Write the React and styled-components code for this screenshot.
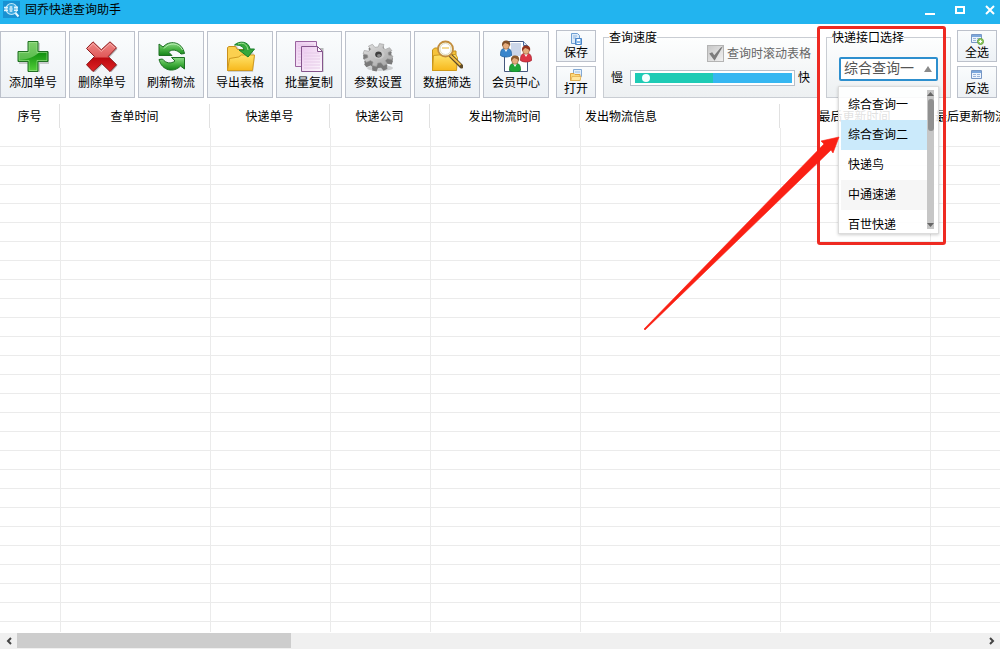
import React, { useState } from "react";
import styled, { createGlobalStyle } from "styled-components";

const GlobalStyle = createGlobalStyle`
  * {
    box-sizing: border-box;
  }
  body {
    margin: 0;
    background: #fff;
    overflow: hidden;
  }
  body, button, select, input {
    font-family: "Liberation Sans", "Noto Sans CJK SC", sans-serif;
    font-size: 12px;
    line-height: 16px;
    color: #000;
  }
`;

const Window = styled.div`
  display: flex;
  flex-direction: column;
  height: 100vh;
`;

const TitleBar = styled.header`
  display: flex;
  align-items: center;
  flex: none;
  height: 24px;
  padding: 0 3px 5px;
  background: #22b4ef;
`;

const AppTitle = styled.h1`
  flex: 1;
  margin: 0 0 0 5px;
  font-size: 12px;
  font-weight: normal;
`;

const WindowButton = styled.button`
  display: flex;
  width: 14px;
  height: 14px;
  margin-left: 16px;
  padding: 0;
  border: none;
  background: none;
`;

const Toolbar = styled.div`
  display: flex;
  align-items: flex-end;
  flex: none;
  padding: 6px 3px 6px 0;
`;

const ToolButtons = styled.div`
  display: flex;
  gap: 3px;
`;

const ToolButton = styled.button`
  display: flex;
  flex-direction: column;
  align-items: center;
  gap: 3px;
  width: 66px;
  height: 67px;
  padding: 8px 0 0;
  border: 1px solid #bcc1cb;
  background: linear-gradient(#fafcfd, #edf1f5);
  white-space: nowrap;
`;

const SmallButtons = styled.div`
  display: flex;
  flex-direction: column;
  gap: 4px;
  margin-left: ${(props) => props.$gap}px;
`;

const SmallButton = styled.button`
  display: flex;
  flex-direction: column;
  align-items: center;
  width: 40px;
  height: 32px;
  padding: 2px 0 0;
  border: 1px solid #bcc1cb;
  background: linear-gradient(#fafcfd, #edf1f5);
`;

const GroupBox = styled.fieldset`
  min-width: 0;
  height: 68px;
  margin: 0;
  padding: 0;
  border: 1px solid #c9cdd3;
  background: linear-gradient(#fdfefe, #edf0f2);
`;

const GroupTitle = styled.legend`
  height: 14px;
  margin-left: 5px;
  padding: 0;
`;

const SpeedArea = styled.div`
  flex: 1;
  margin-left: 7px;
`;

const ScrollOption = styled.label`
  display: flex;
  align-items: center;
  justify-content: flex-end;
  gap: 3px;
  height: 19px;
  padding-right: 6px;
  color: #666;
`;

const CheckBox = styled.input`
  appearance: none;
  width: 17px;
  height: 17px;
  margin: 0;
  border: 1px solid #b4b4b4;
  background: linear-gradient(135deg, #c8c8c8, #f0f0f0);

  &:checked::before {
    content: "";
    display: block;
    width: 15px;
    height: 15px;
    background: #7c7c7c;
    clip-path: polygon(8% 50%, 28% 42%, 42% 62%, 84% 12%, 100% 2%, 44% 98%);
  }
`;

const SpeedRow = styled.div`
  display: flex;
  align-items: center;
  height: 30px;
  padding: 0 7px;
`;

const SpeedSlider = styled.input`
  appearance: none;
  flex: 1;
  min-width: 0;
  height: 16px;
  margin: 0 3px 0 7px;
  padding: 2px 2px 2px 4px;
  border: 1px solid #b7bfca;
  background:
    linear-gradient(90deg, #1ecbb5 50%, #36b7f1 50%) content-box,
    #fff;

  &::-webkit-slider-thumb {
    appearance: none;
    width: 8px;
    height: 8px;
    border-radius: 50%;
    background: #f4ffff;
  }
`;

const ApiArea = styled.div`
  position: relative;
  flex: none;
  width: 125px;
  margin-left: 8px;
`;

const SelectWrap = styled.div`
  position: relative;
  margin: 13px 12px 0;
`;

const ApiSelect = styled.select`
  appearance: none;
  display: block;
  width: 100%;
  height: 24px;
  padding: 0 3px 2px;
  border: 2px solid #2d8fce;
  border-radius: 2px;
  background: #fff;
  font-size: 14px;
  line-height: 18px;
  color: #555;
`;

const SelectArrow = styled.svg`
  position: absolute;
  top: 9px;
  right: 6px;
  pointer-events: none;
`;

const Popup = styled.div`
  position: absolute;
  z-index: 1;
  top: 29px;
  left: -1px;
  right: -1px;
  display: flex;
  height: 148px;
  padding: 3px 4px 1px 2px;
  border: 1px solid #dcdcdc;
  background: rgba(255, 255, 255, 0.88);
  box-shadow: 0 1px 3px rgba(0, 0, 0, 0.2);
`;

const OptionList = styled.ul`
  flex: 1;
  margin: 0;
  padding: 0;
  overflow: hidden;
  list-style: none;
`;

const Option = styled.li`
  height: 30px;
  padding-left: 7px;
  line-height: 30px;
  background: ${(props) =>
    props.$selected ? "#cbeafb" : props.$striped ? "#f6f6f6" : "transparent"};
  cursor: pointer;
`;

const PopupScroll = styled.div`
  display: flex;
  flex-direction: column;
  align-items: center;
  justify-content: space-between;
  width: 7px;
  margin-bottom: 3px;
  padding: 2px 0;
  background: #c6c6c6;
`;

const PopupThumb = styled.div`
  width: 6px;
  height: 32px;
  margin: 3px 0 auto;
  border-radius: 3px;
  background: #909090;
`;

const Frame = styled.div`
  position: absolute;
  z-index: 2;
  top: -4px;
  left: -9px;
  right: 5px;
  height: 219px;
  border: 3px solid #ee2a22;
  border-radius: 3px;
  pointer-events: none;
`;

const Pointer = styled.svg`
  position: absolute;
  z-index: 3;
  top: 100px;
  left: -186px;
  pointer-events: none;
`;

const Grid = styled.main`
  flex: 1;
  min-height: 0;
  overflow: hidden;
`;

const Table = styled.table`
  width: 1130px;
  table-layout: fixed;
  border-collapse: separate;
  border-spacing: 0;
`;

const HeadCell = styled.th`
  height: 24px;
  padding: 2px 5px 0;
  border-right: 1px solid #e1e1e1;
  font-weight: normal;
  text-align: ${(props) => props.$align || "center"};
  white-space: nowrap;
`;

const Cell = styled.td`
  height: 19px;
  padding: 0;
  border-bottom: 1px solid #ebebeb;
  border-left: 1px solid #ebebeb;

  &:first-child {
    border-left: none;
  }
`;

const ScrollBar = styled.div`
  display: flex;
  flex: none;
  height: 16px;
  margin-top: 1px;
  background: #f0f0f0;
`;

const ScrollButton = styled.button`
  display: flex;
  align-items: center;
  justify-content: center;
  width: 17px;
  padding: 0;
  border: none;
  background: #f0f0f0;
`;

const ScrollTrack = styled.div`
  flex: 1;
`;

const ScrollThumb = styled.div`
  width: 28.4%;
  height: 15px;
  background: #cdcdcd;
`;

const Logo = () => (
  <svg width="17" height="17" viewBox="0 0 17 17">
    <rect width="17" height="17" fill="#1791d2" />
    <circle cx="8.500" cy="8" r="5.500" fill="#3ba8df" stroke="#bfe6f8" strokeWidth="1.2" />
    <path d="M12.500 12l3 3.500" stroke="#e6f7ff" strokeWidth="2" />
    <path d="M1 6.500h4M1 9.500h4M2 5.500v5M4 5.500v5M6.500 6h3M6 8h4M6.500 10h3M8 5v6M11 6.500h4M11 9.500h4M12 5v5M14 5v5" stroke="#e8f8ff" strokeWidth=".9" />
  </svg>
);

const AddIcon = () => (
  <svg width="32" height="32" viewBox="0 0 32 32">
    <defs>
      <linearGradient id="add" x2="0" y2="1">
        <stop offset="0" stopColor="#7fcf6c" />
        <stop offset="1" stopColor="#3fae37" />
      </linearGradient>
      <linearGradient id="addLow" x2="0" y2="1">
        <stop offset="0" stopColor="#0c8d0c" />
        <stop offset="1" stopColor="#55d03a" />
      </linearGradient>
    </defs>
    <path d="M12 3h11v9h10v12H23v9H12v-9H2V12h10z" fill="#777" opacity=".35" />
    <path d="M11 1.500h10v10h10v10H21v10H11v-10H1v-10h10z" fill="url(#add)" />
    <path d="M1 20c10 0 18-4 22-8.500h8v10H21v10H11v-10H1z" fill="url(#addLow)" />
    <path d="M12 2.500h8v10h10v8H20v10h-8v-10H2v-8h10z" fill="none" stroke="#a8e59a" opacity=".6" />
    <path d="M11 1.500h10v10h10v10H21v10H11v-10H1v-10h10z" fill="none" stroke="#1f6f22" />
  </svg>
);

const DeleteIcon = () => (
  <svg width="32" height="32" viewBox="0 0 32 32">
    <defs>
      <linearGradient id="del" x2="0" y2="1">
        <stop offset="0" stopColor="#f08a88" />
        <stop offset=".5" stopColor="#e05a5a" />
        <stop offset=".56" stopColor="#bd0a10" />
        <stop offset="1" stopColor="#df2325" />
      </linearGradient>
    </defs>
    <path d="M8 3l8 8 9-8 6.500 6-8 8.500 8 8-6.500 7-8.500-8-8 8-7-7 8-8-8-8z" fill="#555" opacity=".4" />
    <path d="M7 1.800l8.300 8L24 1.800l6.500 6-8.300 8.700 8.300 8.200-6.500 6.800-8.300-8-8.700 8-6.500-6.800 8-8.200-8-8z" fill="url(#del)" stroke="#8c1a1c" strokeLinejoin="round" />
    <path d="M2 8.500l5-5 8.300 8L24 3.500l5 4.500" fill="none" stroke="#fbc0be" opacity=".7" />
  </svg>
);

const RefreshIcon = () => (
  <svg width="32" height="32" viewBox="0 0 32 32">
    <defs>
      <linearGradient id="ref" x2="0" y2="1">
        <stop offset="0" stopColor="#8fda8a" />
        <stop offset=".5" stopColor="#49b344" />
        <stop offset="1" stopColor="#128316" />
      </linearGradient>
    </defs>
    <g fill="url(#ref)" stroke="#1d6f22" strokeLinejoin="round">
      <path d="M4 4l4 3C14 0 27 1 29.500 13.500L26 14C22 9.500 17 9 13.500 12l3.500 3.500H4z" />
      <path d="M29.500 29l-4-3C19 33 7 31 4 19.500L7.500 19C11 23.500 16 24 20 21l-3.500-3.500h13z" />
    </g>
    <path d="M9 8.500C14 2 24 2.500 27.500 10" fill="none" stroke="#b9edb4" />
  </svg>
);

const FolderDefs = ({ id }) => (
  <defs>
    <linearGradient id={id} x2="0" y2="1">
      <stop offset="0" stopColor="#ffe36a" />
      <stop offset="1" stopColor="#f7b81c" />
    </linearGradient>
  </defs>
);

const ExportIcon = () => (
  <svg width="32" height="32" viewBox="0 0 32 32">
    <FolderDefs id="exp" />
    <path d="M4 8l2-2h7l2 3h12l4 7-2 16H4z" fill="#777" opacity=".3" />
    <path d="M3.500 30.500v-23l1.500-1h6.500l2 3H26v11z" fill="#fbd04f" stroke="#c98f1c" />
    <path d="M3.500 30.500l2-12 9-1.500 3-2h13l-2 15.500z" fill="url(#exp)" stroke="#d19a1f" />
    <path d="M10.500 5C15 .5 25 1 26 9h4.500L24 17l-9-7h5C19 6 16 5 10.500 5z" fill="#35a83b" stroke="#187f2b" strokeLinejoin="round" />
    <path d="M14 4c5-2 9 0 10 6" fill="none" stroke="#a0e092" />
  </svg>
);

const CopyIcon = () => (
  <svg width="32" height="32" viewBox="0 0 32 32">
    <defs>
      <linearGradient id="cpy" x2="1" y2="1">
        <stop offset="0" stopColor="#ecc9ef" />
        <stop offset="1" stopColor="#fdf8fd" />
      </linearGradient>
    </defs>
    <path d="M2.500 1.500h21v25h-21z" fill="url(#cpy)" stroke="#9a649f" />
    <path d="M5 5h16M5 8h16M5 11h16M5 14h16M5 17h16M5 20h16M5 23h16" stroke="#e4c4e6" />
    <path d="M10 8h20.500v24H10z" fill="#777" opacity=".5" />
    <path d="M8.500 6.500h16l5 5v20h-21z" fill="url(#cpy)" stroke="#85558d" />
    <path d="M11 13h15M11 16h16M11 19h16M11 22h16M11 25h16M11 28h16" stroke="#e6cbe8" />
    <path d="M24.500 6.500v5h5z" fill="#fff" stroke="#85558d" />
  </svg>
);

// outline of a cog seen at an angle, flattened vertically
const cog = (cx, cy, rx, ry, teeth) => {
  const points = [];
  for (let i = 0; i < teeth; i++) {
    [[-0.3, 0.7], [-0.2, 1], [0.2, 1], [0.3, 0.7]].forEach(([turn, r]) => {
      const a = ((i + turn) / teeth) * Math.PI * 2 + 0.25;
      points.push(`${cx + Math.cos(a) * rx * r},${cy + Math.sin(a) * ry * r}`);
    });
  }
  return points.join(" ");
};

const SettingsIcon = () => (
  <svg width="32" height="32" viewBox="0 0 32 32">
    <defs>
      <linearGradient id="gear" x2="1" y2="1">
        <stop offset="0" stopColor="#e2e2e2" />
        <stop offset="1" stopColor="#a2a2a2" />
      </linearGradient>
    </defs>
    <ellipse cx="18" cy="28" rx="13" ry="3" fill="#888" opacity=".35" />
    {[6, 4.500, 3].map((drop) => (
      <polygon key={drop} points={cog(16, 14 + drop, 15, 11.500, 8)} fill="#7a7a7a" />
    ))}
    <polygon points={cog(16, 15, 15, 11.500, 8)} fill="url(#gear)" stroke="#999" strokeWidth=".6" />
    <ellipse cx="16.500" cy="14.500" rx="6" ry="4.500" fill="#c9c9c9" />
    <ellipse cx="16.500" cy="14.500" rx="3.300" ry="3" fill="#3f3f3f" />
    <ellipse cx="17" cy="15.500" rx="2" ry="1.500" fill="#888" />
  </svg>
);

const FilterIcon = () => (
  <svg width="32" height="32" viewBox="0 0 32 32">
    <FolderDefs id="fil" />
    <path d="M1.500 30.500V10l2-2H10l3 3h12v19.500z" fill="#f6c33a" stroke="#c18f1a" />
    <path d="M1.500 30.500l1-15 10-1h12l2 3-1 13z" fill="url(#fil)" stroke="#cf9b1d" />
    <path d="M20 16l10.500 10.500" stroke="#5f4a26" strokeWidth="4" strokeLinecap="round" />
    <path d="M19 15l10.500 10" stroke="#f2be44" strokeWidth="2" />
    <circle cx="14.500" cy="9" r="7.500" fill="#f5f8e9" stroke="#c28d3e" strokeWidth="1.800" />
    <circle cx="14.500" cy="9" r="5.500" fill="#fff" stroke="#e2dcc0" />
    <path d="M11 8h7" stroke="#f1cf74" strokeWidth="1.500" />
  </svg>
);

const Person = ({ x, y, body, edge, hair }) => (
  <g transform={`translate(${x} ${y})`}>
    <path d="M0 15c-.3-5 1.500-7.500 5.500-7.500S11.300 10 11 15c-3 2-8 2-11 0z" fill={body} stroke={edge} strokeWidth=".8" />
    <path d="M3.500 8l2 3.500 2-3.500z" fill="#fff" />
    <ellipse cx="5.500" cy="4.800" rx="3.300" ry="4" fill="#e5ac7d" stroke="#8d5c38" strokeWidth=".6" />
    <path d="M1.800 6C.5 1.500 3.500-.3 6 0c3.500.2 4.300 3 3.400 6C8.500 3 6 3.400 5 2.600 3.500 3.200 2.800 4 1.800 6z" fill={hair} />
  </g>
);

const MemberIcon = () => (
  <svg width="32" height="32" viewBox="0 0 32 32">
    <path d="M4.500 1.500h19l4 4v26h-23z" fill="#fff" stroke="#45577d" />
    <path d="M11 3h10v13H11z" fill="#cbd6e9" />
    <path d="M23.500 1.500v4h4" fill="#dce6f4" stroke="#45679d" />
    <Person x={0.5} y={0.5} body="#3a86cc" edge="#2564a1" hair="#7e4f29" />
    <Person x={20.5} y={5.5} body="#dc3545" edge="#a92935" hair="#93331d" />
    <Person x={9.500} y={15.500} body="#1fa536" edge="#147c28" hair="#8b5a2c" />
  </svg>
);

const SaveIcon = () => (
  <svg width="14" height="12" viewBox="0 0 14 12">
    <path d="M2.500.5h6l2 2v8h-8z" fill="#dcebfa" stroke="#6f9fd2" />
    <path d="M4 3h4M4 5h3" stroke="#8eb5df" />
    <path d="M6.500 5.500h6v6h-6z" fill="#8cbceb" stroke="#4c85c6" />
    <path d="M8 6h3v2H8zM8 10h3v1H8z" fill="#fff" />
  </svg>
);

const OpenIcon = () => (
  <svg width="14" height="12" viewBox="0 0 14 12">
    <path d="M4.500.5h8v7h-8z" fill="#e3effb" stroke="#83a9d4" />
    <path d="M6 3h5" stroke="#9bbce0" />
    <path d="M1.500 11.500v-7H5l1 1h5v6z" fill="#fbd878" stroke="#dfa545" />
    <path d="M2 11.500l1-4h9l-1 4z" fill="#ffe69e" stroke="#e0aa4c" strokeWidth=".7" />
  </svg>
);

const TableIcon = ({ plus }) => (
  <svg width="14" height="12" viewBox="0 0 14 12">
    <path d="M1.500 1.500h10v8h-10z" fill="#edf4fd" stroke="#7797c5" />
    <path d="M2 3h9" stroke="#7ca8dd" strokeWidth="2" />
    <path d="M3 5.500h3M3 7.500h3M7 5.500h3M7 7.500h3" stroke="#9bb6db" />
    {plus && <circle cx="10.500" cy="8.500" r="3" fill="#96cd69" stroke="#65a43c" />}
    {plus && <path d="M9 8.500h3M10.500 7v3" stroke="#fff" />}
  </svg>
);

const tools = [
  { label: "添加单号", Icon: AddIcon },
  { label: "删除单号", Icon: DeleteIcon },
  { label: "刷新物流", Icon: RefreshIcon },
  { label: "导出表格", Icon: ExportIcon },
  { label: "批量复制", Icon: CopyIcon },
  { label: "参数设置", Icon: SettingsIcon },
  { label: "数据筛选", Icon: FilterIcon },
  { label: "会员中心", Icon: MemberIcon },
];

const columns = [
  { title: "序号", width: 60 },
  { title: "查单时间", width: 150 },
  { title: "快递单号", width: 120 },
  { title: "快递公司", width: 100 },
  { title: "发出物流时间", width: 150 },
  { title: "发出物流信息", width: 200, align: "left" },
  { title: "最后更新时间", width: 150 },
  { title: "最后更新物流信息", width: 200, align: "left" },
];

const apis = ["综合查询一", "综合查询二", "快递鸟", "中通速递", "百世快递"];
const rows = Array.from({ length: 60 }, (_, i) => i);

const App = () => {
  const [api, setApi] = useState(apis[0]);
  const [hovered, setHovered] = useState(apis[1]);
  const [speed, setSpeed] = useState(5);
  const [follow, setFollow] = useState(true);

  return (
    <Window>
      <GlobalStyle />
      <TitleBar>
        <Logo />
        <AppTitle>固乔快递查询助手</AppTitle>
        <WindowButton aria-label="最小化">
          <svg width="14" height="14">
            <path d="M2 10h10v2H2z" fill="#fff" />
          </svg>
        </WindowButton>
        <WindowButton aria-label="最大化">
          <svg width="14" height="14">
            <path d="M3 4h8v6H3z" fill="none" stroke="#fff" strokeWidth="2" />
          </svg>
        </WindowButton>
        <WindowButton aria-label="关闭">
          <svg width="14" height="14">
            <path d="M3 3l8 8M11 3l-8 8" stroke="#fff" strokeWidth="2" />
          </svg>
        </WindowButton>
      </TitleBar>

      <Toolbar>
        <ToolButtons>
          {tools.map(({ label, Icon }) => (
            <ToolButton key={label}>
              <Icon />
              {label}
            </ToolButton>
          ))}
        </ToolButtons>
        <SmallButtons $gap={7}>
          <SmallButton>
            <SaveIcon />
            保存
          </SmallButton>
          <SmallButton>
            <OpenIcon />
            打开
          </SmallButton>
        </SmallButtons>

        <SpeedArea>
          <GroupBox>
            <GroupTitle>查询速度</GroupTitle>
            <ScrollOption>
              <CheckBox
                type="checkbox"
                checked={follow}
                onChange={(e) => setFollow(e.target.checked)}
              />
              查询时滚动表格
            </ScrollOption>
            <SpeedRow>
              <label htmlFor="speed">慢</label>
              <SpeedSlider
                id="speed"
                type="range"
                value={speed}
                onChange={(e) => setSpeed(Number(e.target.value))}
              />
              <span>快</span>
            </SpeedRow>
          </GroupBox>
        </SpeedArea>

        <ApiArea>
          <GroupBox>
            <GroupTitle>快递接口选择</GroupTitle>
            <SelectWrap>
              <ApiSelect
                aria-label="快递接口选择"
                value={api}
                onChange={(e) => setApi(e.target.value)}
              >
                {apis.map((name) => (
                  <option key={name}>{name}</option>
                ))}
              </ApiSelect>
              <SelectArrow width="8" height="6">
                <path d="M0 6l4-6 4 6z" fill="#8a8a8a" />
              </SelectArrow>
              <Popup>
                <OptionList role="listbox" aria-label="快递接口">
                  {apis.map((name, i) => (
                    <Option
                      key={name}
                      role="option"
                      aria-selected={name === api}
                      $selected={name === hovered}
                      $striped={i === 3}
                      onMouseEnter={() => setHovered(name)}
                      onClick={() => setApi(name)}
                    >
                      {name}
                    </Option>
                  ))}
                </OptionList>
                <PopupScroll>
                  <svg width="7" height="4">
                    <path d="M0 4l3.500-4L7 4z" fill="#666" />
                  </svg>
                  <PopupThumb />
                  <svg width="7" height="4">
                    <path d="M0 0l3.500 4L7 0z" fill="#666" />
                  </svg>
                </PopupScroll>
              </Popup>
            </SelectWrap>
          </GroupBox>
          <Frame />
          <Pointer width="204" height="204">
            <path d="M4 199L184 14l-3-3 18-4-6 16-2-3L5 200z" fill="#fa2014" stroke="#fa2014" strokeWidth=".6" />
          </Pointer>
        </ApiArea>

        <SmallButtons $gap={6}>
          <SmallButton>
            <TableIcon plus />
            全选
          </SmallButton>
          <SmallButton>
            <TableIcon />
            反选
          </SmallButton>
        </SmallButtons>
      </Toolbar>

      <Grid>
        <Table>
          <colgroup>
            {columns.map((col) => (
              <col key={col.title} width={col.width} />
            ))}
          </colgroup>
          <thead>
            <tr>
              {columns.map((col) => (
                <HeadCell key={col.title} $align={col.align}>
                  {col.title}
                </HeadCell>
              ))}
            </tr>
          </thead>
          <tbody>
            {rows.map((row) => (
              <tr key={row}>
                {columns.map((col) => (
                  <Cell key={col.title} />
                ))}
              </tr>
            ))}
          </tbody>
        </Table>
      </Grid>

      <ScrollBar>
        <ScrollButton aria-label="向左滚动">
          <svg width="8" height="8">
            <path d="M6 1L3 4l3 3" fill="none" stroke="#444" strokeWidth="2" />
          </svg>
        </ScrollButton>
        <ScrollTrack>
          <ScrollThumb />
        </ScrollTrack>
        <ScrollButton aria-label="向右滚动">
          <svg width="8" height="8">
            <path d="M2 1l3 3-3 3" fill="none" stroke="#444" strokeWidth="2" />
          </svg>
        </ScrollButton>
      </ScrollBar>
    </Window>
  );
};

export default App;
